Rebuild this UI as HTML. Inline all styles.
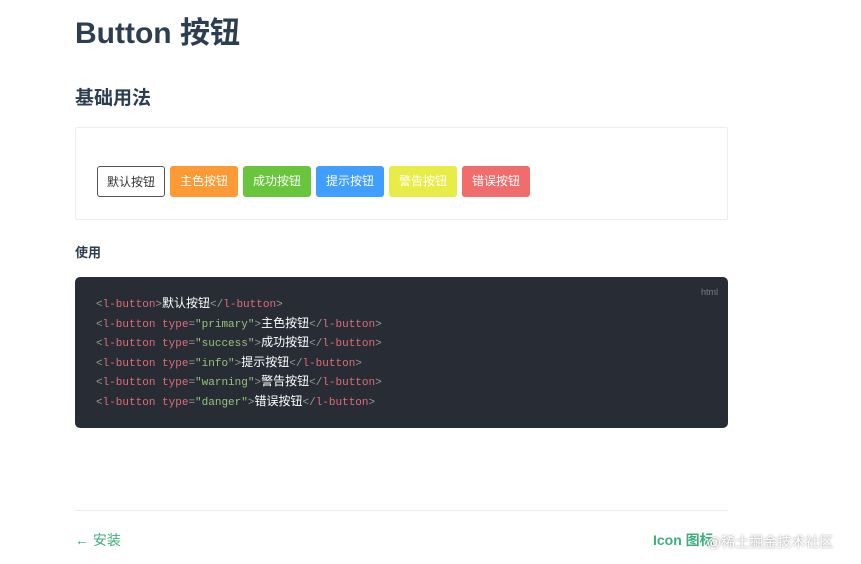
<!DOCTYPE html>
<html><head><meta charset="utf-8"><style>
body{margin:0;background:#fff;font-family:"Liberation Sans","Noto Sans CJK SC",sans-serif;color:#2c3e50;width:861px;height:564px;overflow:hidden;position:relative}
h1{position:absolute;left:75px;top:14px;margin:0;font-size:30px;font-weight:600;line-height:40px}
h2{position:absolute;left:75px;top:86px;margin:0;font-size:19px;font-weight:600;line-height:26px}
.demo{position:absolute;left:75px;top:127px;width:651px;height:91px;border:1px solid #eaecef;border-radius:2px}
.btns{position:absolute;left:21px;top:38px;display:flex;gap:5px}
.b{height:31px;line-height:31px;width:68px;text-align:center;font-size:12px;border-radius:3px;color:#fff;box-sizing:border-box}
.use{position:absolute;left:75px;top:242px;font-size:13px;font-weight:600}
.pre{position:absolute;left:75px;top:277px;width:653px;height:151px;margin:0;background:#282c34;border-radius:5px;box-sizing:border-box;padding:19px 21px;font-family:"Liberation Mono","Noto Sans CJK SC",monospace;font-size:11px;color:#fff}
.pre .l{height:19.5px;line-height:19.5px;white-space:pre;overflow:visible}
.c{font-size:12px;font-family:"Noto Sans CJK SC",sans-serif;line-height:1}
.lang{position:absolute;right:10px;top:9px;font-size:9px;color:#7a7f87;font-family:"Liberation Sans",sans-serif;line-height:12px}
.t{color:#e06c75}.g{color:#999}.s{color:#98c379}
hr{position:absolute;left:75px;top:510px;width:653px;margin:0;border:0;border-top:1px solid #eaecef}
.prev{position:absolute;left:75px;top:530px;font-size:14px;color:#3eaf7c}
.next{position:absolute;left:653px;top:530px;font-size:14px;color:#3eaf7c;font-weight:600}
.wm{position:absolute;left:707px;top:532px;font-size:14px;color:#fff;text-shadow:0 0 2px #888}
</style></head><body>
<h1>Button 按钮</h1>
<h2>基础用法</h2>
<div class="demo"><div class="btns">
<div class="b" style="border:1px solid #555;color:#333;background:#fff">默认按钮</div>
<div class="b" style="background:#fe9a35">主色按钮</div>
<div class="b" style="background:#69c53c">成功按钮</div>
<div class="b" style="background:#409eff">提示按钮</div>
<div class="b" style="background:#e8ec46">警告按钮</div>
<div class="b" style="background:#f16c6c">错误按钮</div>
</div></div>
<div class="use">使用</div>
<div class="pre"><span class="lang">html</span>
<div class="l"><span class="g">&lt;</span><span class="t">l-button</span><span class="g">&gt;</span><span class="c">默认按钮</span><span class="g">&lt;/</span><span class="t">l-button</span><span class="g">&gt;</span></div>
<div class="l"><span class="g">&lt;</span><span class="t">l-button type</span><span class="g">=</span><span class="s">"primary"</span><span class="g">&gt;</span><span class="c">主色按钮</span><span class="g">&lt;/</span><span class="t">l-button</span><span class="g">&gt;</span></div>
<div class="l"><span class="g">&lt;</span><span class="t">l-button type</span><span class="g">=</span><span class="s">"success"</span><span class="g">&gt;</span><span class="c">成功按钮</span><span class="g">&lt;/</span><span class="t">l-button</span><span class="g">&gt;</span></div>
<div class="l"><span class="g">&lt;</span><span class="t">l-button type</span><span class="g">=</span><span class="s">"info"</span><span class="g">&gt;</span><span class="c">提示按钮</span><span class="g">&lt;/</span><span class="t">l-button</span><span class="g">&gt;</span></div>
<div class="l"><span class="g">&lt;</span><span class="t">l-button type</span><span class="g">=</span><span class="s">"warning"</span><span class="g">&gt;</span><span class="c">警告按钮</span><span class="g">&lt;/</span><span class="t">l-button</span><span class="g">&gt;</span></div>
<div class="l"><span class="g">&lt;</span><span class="t">l-button type</span><span class="g">=</span><span class="s">"danger"</span><span class="g">&gt;</span><span class="c">错误按钮</span><span class="g">&lt;/</span><span class="t">l-button</span><span class="g">&gt;</span></div>
</div>
<hr>
<div class="prev">← 安装</div>
<div class="next">Icon 图标</div>
<div class="wm">@稀土掘金技术社区</div>
</body></html>
